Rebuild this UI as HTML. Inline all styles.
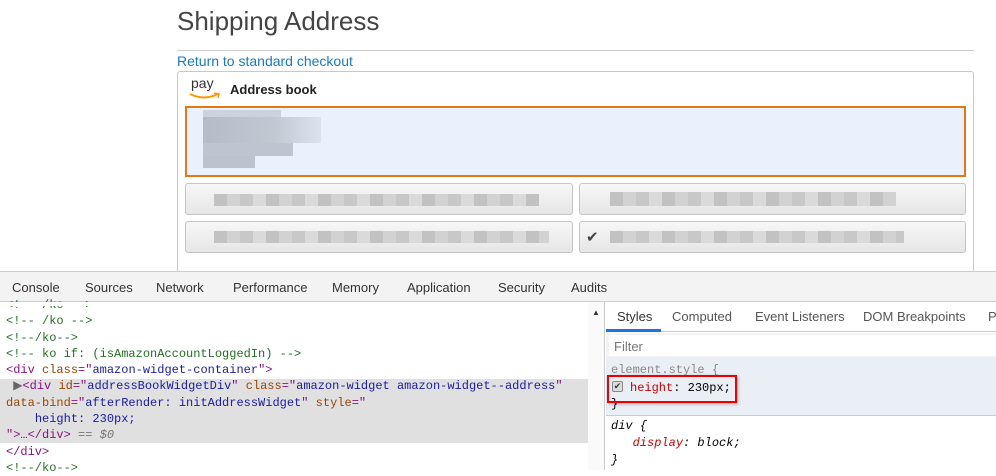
<!DOCTYPE html>
<html><head><style>
*{margin:0;padding:0;box-sizing:border-box}
body{width:996px;height:470px;overflow:hidden;background:#fff;font-family:"Liberation Sans",sans-serif;position:relative}
.a{position:absolute}
.mono{font-family:"Liberation Mono",monospace;font-size:12px;white-space:pre}
.btn{position:absolute;border:1px solid #c4c4c4;border-radius:3px;background:linear-gradient(#f7f7f7,#e6e6e6)}
.blur{position:absolute;height:12px;background:repeating-linear-gradient(90deg,#c2c2c2 0 13px,#d2d2d2 13px 26px,#c8c8c8 26px 39px,#dadada 39px 52px)}
.tab{position:absolute;top:280px;font-size:13px;color:#333}
.tag{color:#881280}.at{color:#994500}.av{color:#1a1aa6}.cm{color:#236e25}
</style></head><body>
<div class="a" style="left:177px;top:6px;font-size:26px;color:#444;font-weight:300">Shipping Address</div>
<div class="a" style="left:177px;top:50px;width:797px;height:1px;background:#ccc"></div>
<div class="a" style="left:177px;top:53px;font-size:14px;color:#1979c3">Return to standard checkout</div>
<div class="a" style="left:177px;top:71px;width:797px;height:201px;border:1px solid #c8c8c8;border-bottom:none;border-radius:3px 3px 0 0"></div>
<div class="a" style="left:191px;top:75px;font-size:14px;color:#333">pay</div>
<svg class="a" style="left:188px;top:92px" width="34" height="8"><path d="M2 2 Q16 9 30 2" stroke="#f90" stroke-width="2" fill="none"/><path d="M26 1 L31 2 L30 6" stroke="#f90" stroke-width="1.5" fill="none"/></svg>
<div class="a" style="left:230px;top:82px;font-size:13px;font-weight:bold;color:#222">Address book</div>
<div class="a" style="left:185px;top:106px;width:781px;height:71px;border:2px solid #e47911;background:#eaf1fd"></div>
<div class="a" style="left:203px;top:110px;width:78px;height:13px;background:#cdd3de"></div>
<div class="a" style="left:203px;top:117px;width:118px;height:26px;background:linear-gradient(90deg,#b6bcc7,#c2c8d2 60%,#dde3ee)"></div>
<div class="a" style="left:203px;top:143px;width:90px;height:13px;background:#bfc5d0"></div>
<div class="a" style="left:203px;top:156px;width:52px;height:12px;background:#bdc3ce"></div>
<div class="btn" style="left:185px;top:183px;width:388px;height:32px"></div>
<div class="btn" style="left:579px;top:183px;width:387px;height:32px"></div>
<div class="btn" style="left:185px;top:221px;width:388px;height:32px"></div>
<div class="btn" style="left:579px;top:221px;width:387px;height:32px"></div>
<div class="blur" style="left:214px;top:194px;width:325px"></div>
<div class="blur" style="left:610px;top:192px;width:286px;height:14px"></div>
<div class="blur" style="left:214px;top:231px;width:335px"></div>
<div class="a" style="left:586px;top:228px;font-size:15px;color:#444">✔</div>
<div class="blur" style="left:610px;top:231px;width:294px"></div>
<!-- devtools -->
<div class="a" style="left:0;top:271px;width:996px;height:31px;background:#f3f3f3;border-top:1px solid #ccc;border-bottom:1px solid #ccc"></div>
<div class="tab" style="left:12px">Console</div><div class="tab" style="left:85px">Sources</div><div class="tab" style="left:156px">Network</div><div class="tab" style="left:233px">Performance</div><div class="tab" style="left:332px">Memory</div><div class="tab" style="left:407px">Application</div><div class="tab" style="left:498px">Security</div><div class="tab" style="left:571px">Audits</div>
<div class="a" style="left:0;top:302px;width:588px;height:168px;background:#fff"></div>
<div class="a" style="left:0;top:379px;width:588px;height:64px;background:#e0e0e0"></div>
<div class="a" style="left:588px;top:302px;width:17px;height:168px;background:#fafafa;border-right:1px solid #ccc"></div>
<div class="a" style="left:592px;top:308px;font-size:8px;color:#333">▲</div>
<div class="a mono" style="left:6px;top:297px;line-height:16.3px"><span class="cm">&lt;!-- /ko --&gt;
&lt;!-- /ko --&gt;
&lt;!--/ko--&gt;
&lt;!-- ko if: (isAmazonAccountLoggedIn) --&gt;</span>
<span class="tag">&lt;div</span> <span class="at">class</span><span class="tag">="</span><span class="av">amazon-widget-container</span><span class="tag">"&gt;</span>
 <span style="color:#666">▶</span><span class="tag">&lt;div</span> <span class="at">id</span><span class="tag">="</span><span class="av">addressBookWidgetDiv</span><span class="tag">"</span> <span class="at">class</span><span class="tag">="</span><span class="av">amazon-widget amazon-widget--address</span><span class="tag">"</span>
<span class="at">data-bind</span><span class="tag">="</span><span class="av">afterRender: initAddressWidget</span><span class="tag">"</span> <span class="at">style</span><span class="tag">="</span>
    <span class="av">height: 230px;</span>
<span class="tag">"&gt;…&lt;/div&gt;</span> <span style="color:#777">== <i>$0</i></span>
<span class="tag">&lt;/div&gt;</span>
<span class="cm">&lt;!--/ko--&gt;</span></div>
<div class="a" style="left:0;top:302px;width:588px;height:4px;background:#fff"></div>
<div class="a" style="left:606px;top:302px;width:390px;height:168px;background:#fff"></div>
<div class="a" style="left:606px;top:302px;width:390px;height:30px;border-bottom:1px solid #ccc"></div>
<div class="a" style="left:606px;top:329px;width:55px;height:3px;background:#1a73e8"></div>
<div class="a" style="left:617px;top:309px;font-size:13px;color:#333">Styles</div>
<div class="a" style="left:672px;top:309px;font-size:13px;color:#555">Computed</div>
<div class="a" style="left:755px;top:309px;font-size:13px;color:#555">Event Listeners</div>
<div class="a" style="left:863px;top:309px;font-size:13px;color:#555">DOM Breakpoints</div>
<div class="a" style="left:988px;top:309px;font-size:13px;color:#555">P</div>
<div class="a" style="left:606px;top:333px;width:390px;height:24px;background:#f3f3f3"></div>
<div class="a" style="left:609px;top:335px;width:387px;height:21px;background:#fff"></div>
<div class="a" style="left:614px;top:339px;font-size:13px;color:#777">Filter</div>
<div class="a" style="left:606px;top:357px;width:390px;height:59px;background:#eaeef5;border-bottom:1px solid #ccc"></div>
<div class="a mono" style="left:611px;top:363px;color:#888">element.style {</div>
<div class="a" style="left:612px;top:381px;width:11px;height:11px;border:1px solid #888;border-radius:2px;background:#ddd;font-size:9px;line-height:9px;text-align:center;color:#333">✔</div>
<div class="a mono" style="left:630px;top:381px"><span style="color:#c80000">height</span>: 230px;</div>
<div class="a mono" style="left:611px;top:397px">}</div>
<div class="a" style="left:607px;top:375px;width:130px;height:28px;border:2px solid #e00;box-shadow:1px 1px 3px rgba(0,0,0,.3)"></div>
<div class="a mono" style="left:611px;top:418px;line-height:17px;font-style:italic">div {
   <span style="color:#c80000">display</span>: block;
}</div>
</body></html>
